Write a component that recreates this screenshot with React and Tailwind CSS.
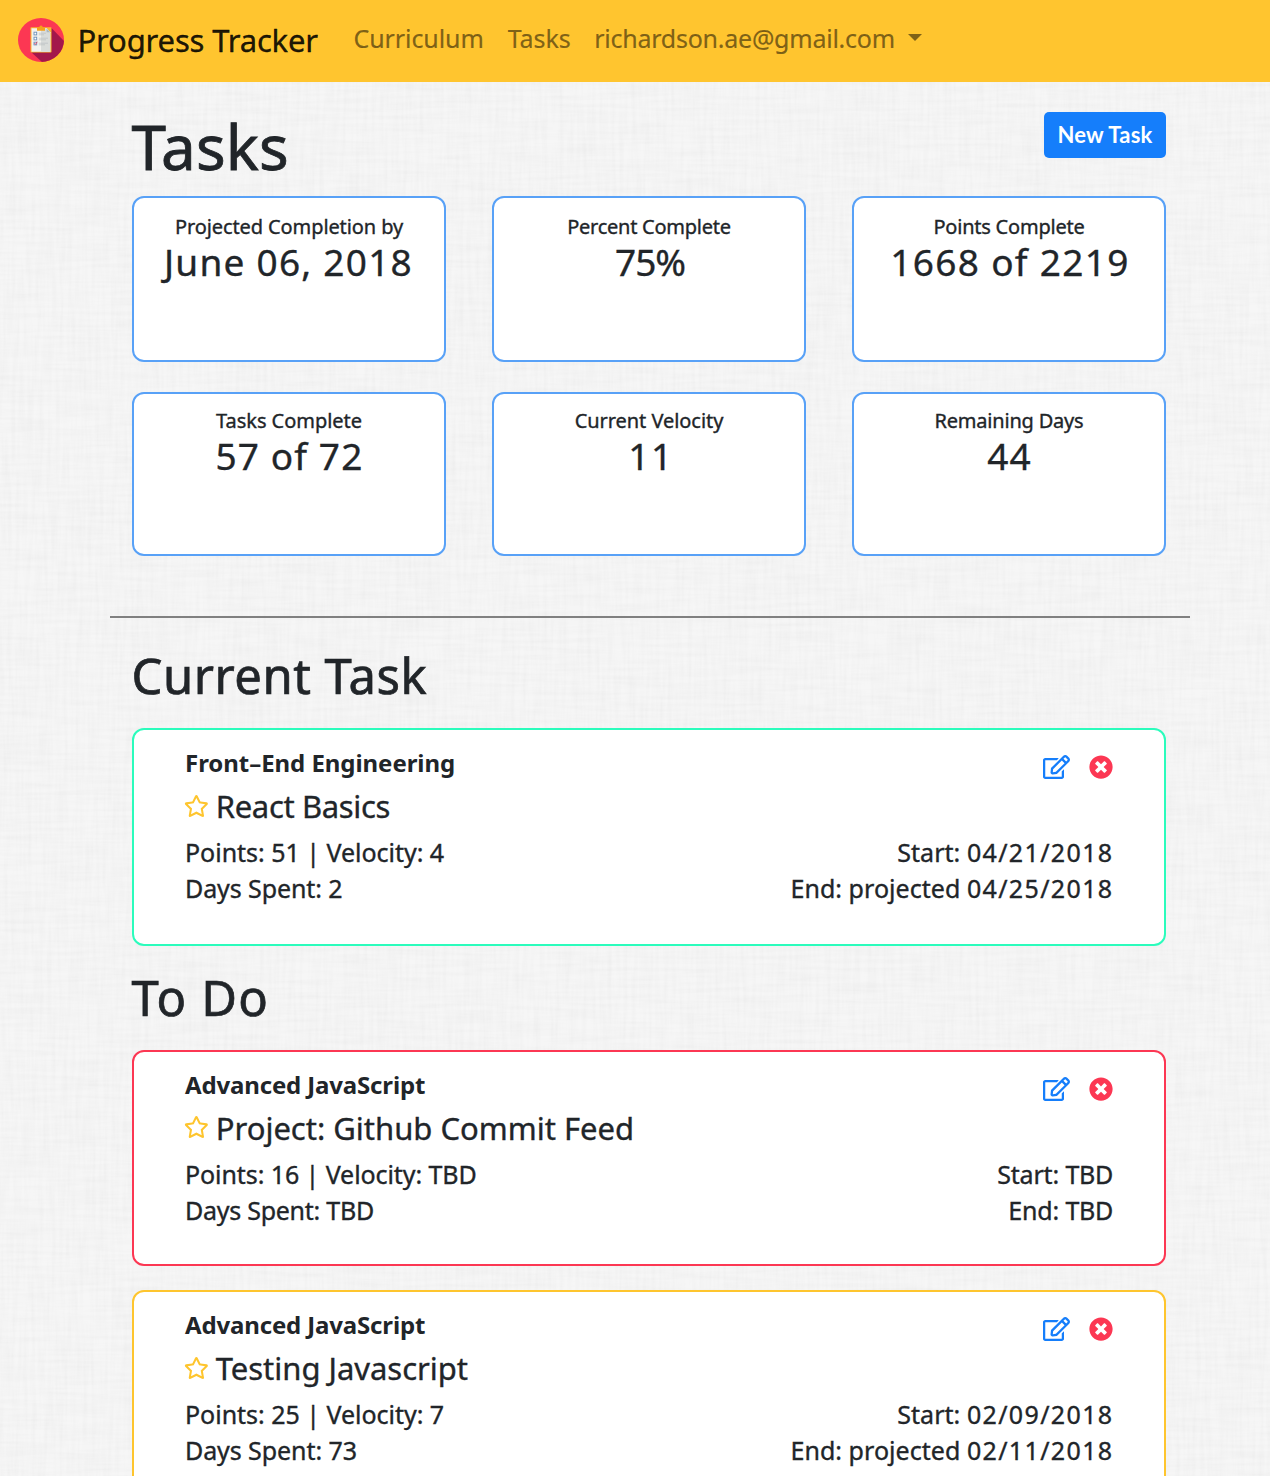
import { FaRegEdit, FaRegStar, FaTimesCircle } from "react-icons/fa";

const stats = [
  { label: "Projected Completion by", labelClass: "tracking-[-0.1px]", value: "June 06, 2018", valueClass: "tracking-[1.24px] -indent-[1px]" },
  { label: "Percent Complete", labelClass: "tracking-[-0.25px]", value: "75%", valueClass: "tracking-[-1.1px] indent-[2px]" },
  { label: "Points Complete", labelClass: "tracking-[-0.22px]", value: "1668 of 2219", valueClass: "tracking-[1.3px] indent-[2px]" },
  { label: "Tasks Complete", labelClass: "tracking-[-0.05px]", value: "57 of 72", valueClass: "tracking-[1.1px] indent-[1px]" },
  { label: "Current Velocity", labelClass: "tracking-[-0.05px]", value: "11", valueClass: "tracking-[1.5px] indent-[4px]" },
  { label: "Remaining Days", labelClass: "tracking-[-0.2px]", value: "44", valueClass: "tracking-[1.2px] indent-[1px]" },
];

const currentTask = {
  border: "h-[218px] border-[#2bfcbc]",
  category: "Front–End Engineering",
  categoryClass: "tracking-[-0.05px]",
  title: "React Basics",
  titleClass: "tracking-[-0.34px]",
  points: "Points: 51 | Velocity: 4",
  pointsClass: "tracking-[-0.02px]",
  days: "Days Spent: 2",
  daysClass: "tracking-[-0.1px]",
  startLabel: "Start: ",
  start: "04/21/2018",
  endLabel: "End: projected ",
  end: "04/25/2018",
  labelClass: "tracking-[0.04px]",
  dateClass: "tracking-[1.36px]",
  datesClass: "-mr-[0.5px]",
};

const todoTasks = [
  {
    border: "h-[216px] border-[#fc3753]",
    category: "Advanced JavaScript",
    categoryClass: "tracking-[-0.15px]",
    title: "Project: Github Commit Feed",
    titleClass: "tracking-[-0.01px]",
    starClass: "-top-px",
    points: "Points: 16 | Velocity: TBD",
    pointsClass: "tracking-[-0.08px]",
    days: "Days Spent: TBD",
    daysClass: "tracking-[-0.26px]",
    startLabel: "Start: ",
    start: "TBD",
    endLabel: "End: ",
    end: "TBD",
    labelClass: "tracking-[-0.16px]",
    dateClass: "tracking-[-0.26px]",
    datesClass: "",
  },
  {
    border: "h-[218px] border-[#fec52e]",
    category: "Advanced JavaScript",
    categoryClass: "tracking-[-0.15px]",
    title: "Testing Javascript",
    titleClass: "tracking-[-0.02px]",
    points: "Points: 25 | Velocity: 7",
    pointsClass: "tracking-[-0.02px]",
    days: "Days Spent: 73",
    daysClass: "tracking-[-0.08px]",
    startLabel: "Start: ",
    start: "02/09/2018",
    endLabel: "End: projected ",
    end: "02/11/2018",
    labelClass: "tracking-[0.04px]",
    dateClass: "tracking-[1.36px]",
    datesClass: "-mr-[0.5px]",
  },
];

function Logo() {
  return (
    <svg viewBox="0 0 46 44" className="h-[44px] w-[46px] shrink-0" aria-hidden="true">
      <defs>
        <clipPath id="disc">
          <ellipse cx="23" cy="22" rx="23" ry="22" />
        </clipPath>
      </defs>
      <g clipPath="url(#disc)">
        <rect width="46" height="44" fill="#fc3753" />
        <path d="M33.5 10 46 23V44H24L13 34Z" fill="#a3174b" />
      </g>
      <rect x="12.5" y="9.3" width="21" height="25.2" rx="0.8" fill="#fab72f" />
      <path d="M13.5 10.3H28.6L32.3 14.2V33.8H13.5Z" fill="#f3f2ee" />
      <path d="M23 10.3H28.6L32.3 14.2V33.8H23Z" fill="#d9dcda" />
      <path d="M28.6 10.8V14.2H32.3Z" fill="#a9b6c0" />
      <path d="M19 12.7V10.2Q19 9.2 20 9.2H21.3Q21.3 7.4 23 7.4T24.7 9.2H26Q27 9.2 27 10.2V12.7Z" fill="#f5a11c" />
      <g fill="#fff" stroke="#6c8fb8" strokeWidth="0.9">
        <rect x="16" y="14.2" width="2.7" height="2.7" />
        <rect x="16" y="19.2" width="2.7" height="2.7" />
        <rect x="16" y="24.2" width="2.7" height="2.7" />
      </g>
      <path d="M16.4 25.4 17.4 26.4 19.2 23.8" fill="none" stroke="#e0405e" strokeWidth="0.9" />
      <path d="M20.8 15.2H28M20.8 16.8H26M20.8 20.2H30M20.8 21.8H28M20.8 25.2H30M20.8 26.8H27" stroke="#b9bfc1" strokeWidth="0.7" />
    </svg>
  );
}

function Linen() {
  return (
    <svg className="pointer-events-none absolute inset-0 h-full w-full opacity-35" aria-hidden="true">
      <filter id="weft" x="0" y="0" width="100%" height="100%" colorInterpolationFilters="sRGB">
        <feTurbulence type="fractalNoise" baseFrequency="0.018 0.25" numOctaves="3" seed="4" />
        <feColorMatrix values="0 0 0 0 0  0 0 0 0 0  0 0 0 0 0  0.1 0 0 0 -0.033" />
      </filter>
      <filter id="warp" x="0" y="0" width="100%" height="100%" colorInterpolationFilters="sRGB">
        <feTurbulence type="fractalNoise" baseFrequency="0.25 0.018" numOctaves="3" seed="9" />
        <feColorMatrix values="0 0 0 0 0  0 0 0 0 0  0 0 0 0 0  0.1 0 0 0 -0.033" />
      </filter>
      <rect width="100%" height="100%" filter="url(#weft)" />
      <rect width="100%" height="100%" filter="url(#warp)" />
    </svg>
  );
}

function Navbar() {
  return (
    <nav className="relative flex h-[82px] items-center bg-[#ffc52f] pb-[2px] pl-[18px]">
      <Logo />
      <a className="ml-[13.5px] text-[31px] leading-[40px] tracking-[-0.17px] text-black/90">Progress Tracker</a>
      <div className="ml-[35.5px] flex items-center pb-1 text-[25px] leading-[36px] text-black/50 [-webkit-text-stroke:0.2px]">
        <a className="tracking-[-0.08px]">Curriculum</a>
        <a className="ml-6 tracking-[-0.06px]">Tasks</a>
        <a className="ml-[23.5px] tracking-[-0.24px]">richardson.ae@gmail.com</a>
        <span className="mb-px ml-[13px] border-x-[7px] border-t-[7px] border-x-transparent border-t-black/50" />
      </div>
    </nav>
  );
}

function StatCard({ label, labelClass, value, valueClass }) {
  return (
    <div className="rounded-xl border-2 border-[#58a1f7] bg-white text-center group-first:pt-[17px] group-last:pt-[15px]">
      <div className={`text-[20px] leading-[24px] ${labelClass}`}>{label}</div>
      <div className={`mt-px text-[37px] leading-[44px] ${valueClass}`}>{value}</div>
    </div>
  );
}

function StatRow({ items, className }) {
  return (
    <div className={`group grid grid-cols-3 gap-[46px] ${className}`}>
      {items.map((s) => (
        <StatCard key={s.label} {...s} />
      ))}
    </div>
  );
}

function TaskCard({ task }) {
  return (
    <article className={`rounded-xl border-2 bg-white pt-[18px] pr-[51px] pl-[51px] ${task.border}`}>
      <div className="flex justify-between">
        <h3 className={`text-[24px] leading-[30px] font-bold [-webkit-text-stroke:0] ${task.categoryClass}`}>{task.category}</h3>
        <div className="flex gap-[19.5px] pt-[7px]">
          <FaRegEdit className="h-6 w-[27px] text-[#157efb]" />
          <FaTimesCircle className="h-6 w-6 text-[#fc3753]" />
        </div>
      </div>
      <div className="mt-[9px] flex">
        <FaRegStar className={`relative mt-[7px] -ml-[1px] h-[22px] w-[24.75px] text-[#fec52e] ${task.starClass ?? ""}`} />
        <h4 className={`ml-[7px] text-[31px] leading-[36px] ${task.titleClass}`}>{task.title}</h4>
      </div>
      <div className="mt-2.5 flex justify-between text-[25px] leading-[36px]">
        <div>
          <p className={task.pointsClass}>{task.points}</p>
          <p className={task.daysClass}>{task.days}</p>
        </div>
        <div className={`text-right ${task.datesClass}`}>
          <p>
            <span className={task.labelClass}>{task.startLabel}</span>
            <span className={task.dateClass}>{task.start}</span>
          </p>
          <p>
            <span className={task.labelClass}>{task.endLabel}</span>
            <span className={task.dateClass}>{task.end}</span>
          </p>
        </div>
      </div>
    </article>
  );
}

export default function App() {
  return (
    <div className="relative h-[1476px] overflow-hidden bg-[#f6f6f6] font-['Noto_Sans',sans-serif] text-[#212529] [-webkit-text-stroke:0.35px]">
      <Linen />
      <Navbar />
      <main className="relative mr-[104px] ml-[132px] pt-[27px]">
        <div className="flex items-start justify-between">
          <h1 className="-ml-[0.5px] text-[62px] leading-[74px] tracking-[0.1px] [-webkit-text-stroke:0.8px]">Tasks</h1>
          <button className="mt-[3px] h-[46px] w-[122px] rounded-[5px] bg-[#157efb] pb-[2px] font-['Lato',sans-serif] text-[22px] font-bold tracking-[0.2px] text-white [-webkit-text-stroke:0]">
            New Task
          </button>
        </div>
        <section className="mt-[13px]">
          <StatRow items={stats.slice(0, 3)} className="h-[166px]" />
          <StatRow items={stats.slice(3)} className="mt-[30px] h-[164px]" />
        </section>
        <hr className="mt-[60px] -mr-6 -ml-[22px] border-t-2 border-[#808080]" />
        <h2 className="mt-7 -ml-[0.5px] text-[49px] leading-[58px] tracking-[0.5px] [-webkit-text-stroke:0.7px]">Current Task</h2>
        <div className="mt-6">
          <TaskCard task={currentTask} />
        </div>
        <h2 className="mt-[22px] -ml-[0.5px] text-[49px] leading-[58px] tracking-[1.2px] [-webkit-text-stroke:0.7px]">To Do</h2>
        <div className="mt-6 flex flex-col gap-6">
          {todoTasks.map((task) => (
            <TaskCard key={task.title} task={task} />
          ))}
        </div>
      </main>
    </div>
  );
}
